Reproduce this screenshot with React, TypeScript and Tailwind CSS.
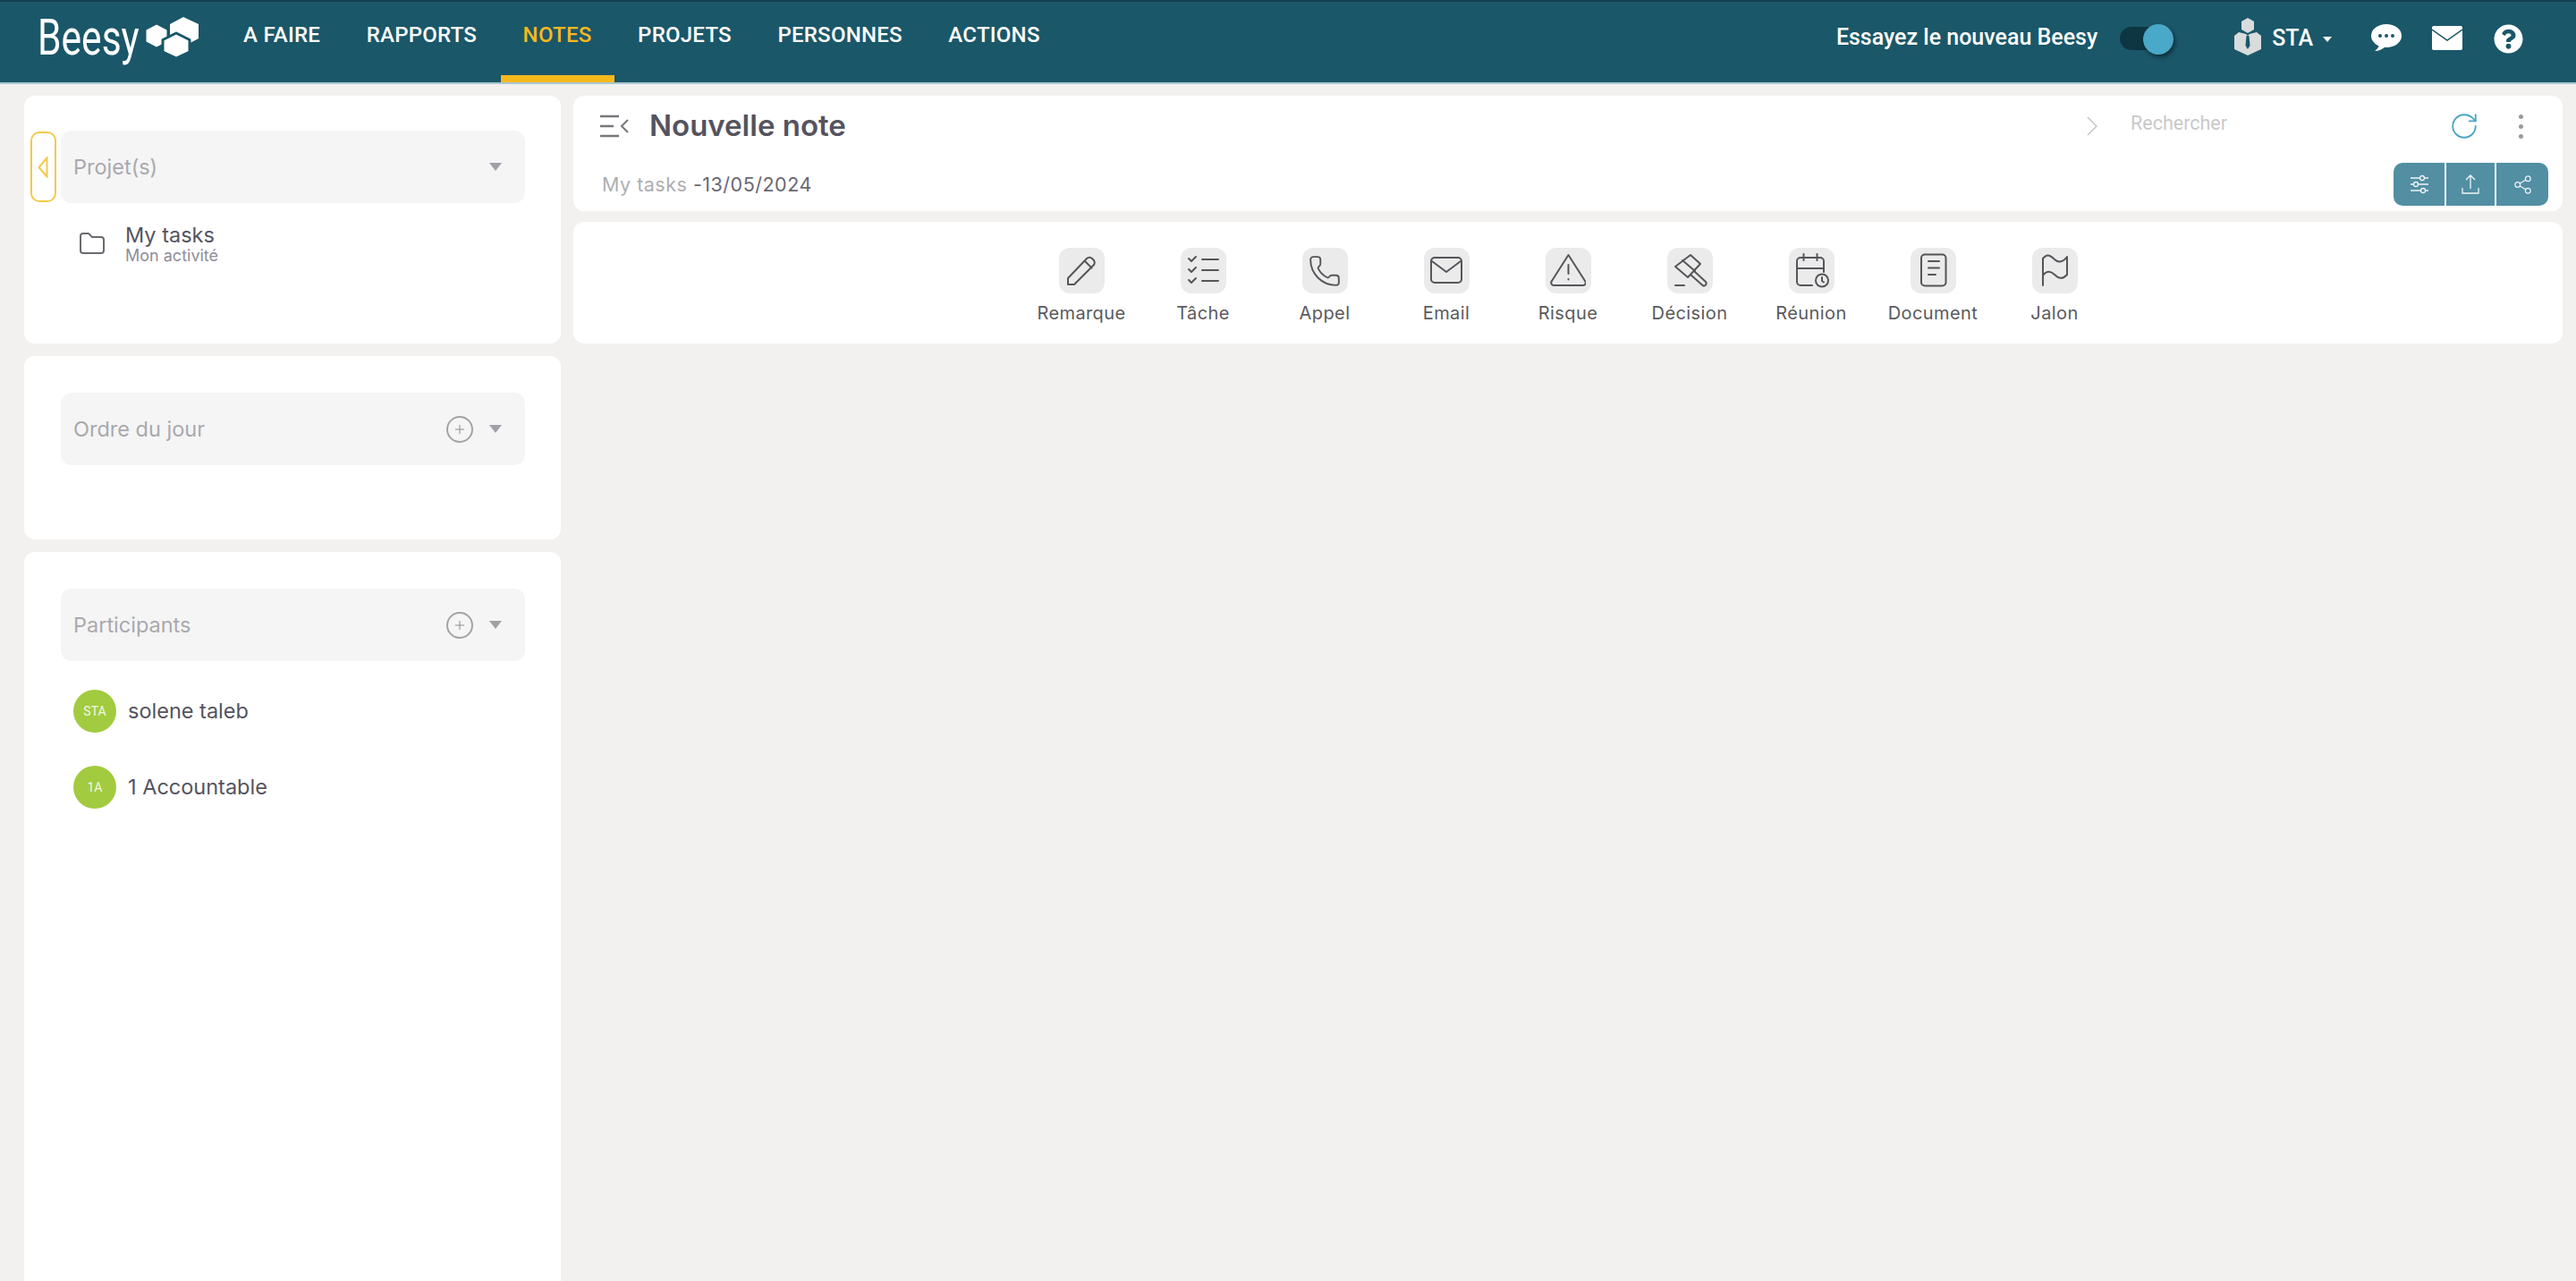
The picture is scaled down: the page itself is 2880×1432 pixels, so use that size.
import { ReactNode } from 'react';
import { Plus, Phone, Share2, RotateCw } from 'lucide-react';
import { FaQuestionCircle } from 'react-icons/fa';

const navItems = ['A FAIRE', 'RAPPORTS', 'NOTES', 'PROJETS', 'PERSONNES', 'ACTIONS'];

function Glyph({ children }: { children: ReactNode }) {
    return (
        <svg viewBox="0 0 40 40" className="w-10 h-10" fill="none" stroke="#55555a" strokeWidth="2" strokeLinecap="round" strokeLinejoin="round">
            {children}
        </svg>
    );
}

const tools: { label: string; icon: ReactNode }[] = [
    {
        label: 'Remarque',
        icon: <Glyph><path d="M5 35v-7L26 6a4.2 4.2 0 0 1 6 0l1.5 1.5a4.2 4.2 0 0 1 0 6L12 35Z" /><path d="M24 9l7.5 7.5" /></Glyph>,
    },
    {
        label: 'Tâche',
        icon: <Glyph><path d="M4 6l3 3 5-5M4 18l3 3 5-5M4 30l3 3 5-5" /><path d="M19 7h18M19 19h18M19 31h18" /></Glyph>,
    },
    {
        label: 'Appel',
        icon: <div className="w-10 h-10 flex items-center justify-center"><Phone size={38} strokeWidth={1.2} className="text-[#55555a]" /></div>,
    },
    {
        label: 'Email',
        icon: <Glyph><rect x="3" y="5" width="34" height="28" rx="4" /><path d="M4 9l16 12L36 9" /></Glyph>,
    },
    {
        label: 'Risque',
        icon: <Glyph><path d="M20.5 2 39 31a3 3 0 0 1-2.5 5h-32A3 3 0 0 1 2 31Z" /><path d="M20.5 13v10M20.5 29v.5" /></Glyph>,
    },
    {
        label: 'Décision',
        icon: <Glyph><path d="M21 2l11 10-14 15L4 15Z" /><path d="M12 8l14 12" /><path d="M25 20l13 12a2.5 2.5 0 0 1-4 3.5L21 24" /><path d="M4 36h10" /></Glyph>,
    },
    {
        label: 'Réunion',
        icon: <Glyph><path d="M21 36H8a4 4 0 0 1-4-4V9a4 4 0 0 1 4-4h22a4 4 0 0 1 4 4v12" /><path d="M11.500 1v7M26.500 1v7M4 17h30" /><circle cx="32" cy="30.500" r="7" /><path d="M32 27v4l2 1.500" /></Glyph>,
    },
    {
        label: 'Document',
        icon: <Glyph><rect x="7" y="1.500" width="27.500" height="35" rx="4" /><path d="M15 9h12M15 16.500h12M15 24h8" /></Glyph>,
    },
    {
        label: 'Jalon',
        icon: <Glyph><path d="M7 36V6c5-6 9-3 13 1s10 3 14-3v20c-5 6-10 4-14 0s-9-5-13 1" /></Glyph>,
    },
];

function Caret() {
    return <div className="w-0 h-0 border-x-[7.5px] border-x-transparent border-t-[9px] border-t-[#a0a0a8]" />;
}

function SectionSelect({ label, withAdd }: { label: string; withAdd?: boolean }) {
    return (
        <div className="h-[81px] bg-[#f5f5f5] rounded-[12px] flex items-center pl-[14px] pr-[26px]">
            <span className="flex-1 text-[23.5px] text-[#a9a9ad]">{label}</span>
            {withAdd && (
                <div className="w-[30px] h-[30px] mr-[18px] rounded-full border-2 border-[#a3a3a7] flex items-center justify-center">
                    <Plus size={16} strokeWidth={1.5} className="text-[#8d8d92]" />
                </div>
            )}
            <Caret />
        </div>
    );
}

function Person({ initials, name }: { initials: string; name: string }) {
    return (
        <div className="flex items-center gap-[13px] pl-[14px]">
            <div className="w-[48px] h-[48px] rounded-full bg-[#a2cb3f] flex items-center justify-center text-[14px] text-white/85 font-['Roboto',sans-serif]">
                {initials}
            </div>
            <span className="text-[23.5px] text-[#55535f]">{name}</span>
        </div>
    );
}

export default function App() {
    return (
        <div className="h-[1432px] overflow-hidden bg-[#f2f1ef] flex flex-col font-['Inter',sans-serif]">

            {/* Top bar */}
            <header className="h-[94px] shrink-0 bg-[#1a5769] border-t-2 border-t-[#10404f] border-b-2 border-b-[#a9c7d0] flex items-stretch font-['Roboto',sans-serif] text-white">
                <div className="w-[247px] shrink-0 flex items-start pl-[42px]">
                    <span className="text-[56px] leading-[56px] mt-[12px] origin-left scale-x-[0.76] w-[121px]">Beesy</span>
                    <svg viewBox="0 0 60 50" className="w-[60px] h-[50px] mt-[15px]" fill="white">
                        <path d="M12 10.500l11.500 6v13l-11.500 6-11.500-6v-13Z" />
                        <path d="M42 2l17 8v16l-17 9-15-9V10Z" />
                        <path d="M34 20l15 7.500V41l-15 7-15-7V27.500Z" stroke="#1a5769" strokeWidth="3" strokeLinejoin="round" />
                    </svg>
                </div>

                <nav className="flex items-stretch gap-[1.5px]">
                    {navItems.map((item) => (
                        <div
                            key={item}
                            className={`px-[25px] pt-[22px] text-[24px] tracking-[0.25px] leading-[30px] font-medium border-b-[8px] ${item === 'NOTES' ? 'text-[#f6b91d] border-b-[#f6b91d]' : 'border-b-transparent'}`}
                        >
                            {item}
                        </div>
                    ))}
                </nav>

                <div className="flex-1 flex items-start justify-end pr-[59px]">
                    <span className="mt-[25px] text-[25px] leading-[30px] font-medium">Essayez le nouveau Beesy</span>

                    {/* Toggle */}
                    <div className="relative w-[60px] h-[26px] mt-[28px] ml-[25px] rounded-full bg-[#0d3542]">
                        <div className="absolute left-[26px] -top-[3px] w-[34px] h-[34px] rounded-full bg-[#4aa8c8] shadow-[2px_3px_4px_rgba(0,0,0,0.45)]" />
                    </div>

                    <svg viewBox="0 0 30 42" className="w-[30px] h-[42px] mt-[18px] ml-[68px]" fill="#d8dcdc">
                        <path d="M15 0l7 4v9l-7 4-7-4V4Z" />
                        <path d="M5 16l8 2 2 2 2-2 8-2 5 4v15l-15 7-15-7V20Z" />
                        <path d="M13.500 20h3l1 11-2.500 4-2.500-4Z" fill="#1a5769" />
                    </svg>

                    <span className="mt-[26px] ml-[12px] text-[25px] leading-[30px] font-medium">STA</span>
                    <div className="mt-[39px] ml-[11px] w-0 h-0 border-x-[5.500px] border-x-transparent border-t-[6px] border-t-white" />

                    <svg viewBox="0 0 34 30" className="w-[34px] h-[30px] mt-[25px] ml-[44px]">
                        <ellipse cx="17" cy="13" rx="17" ry="13" fill="white" />
                        <path d="M9 22c0 3-2 6-5 8 4 0 9-2 12-5Z" fill="white" />
                        <circle cx="10" cy="13" r="2" fill="#1a5769" />
                        <circle cx="17" cy="13" r="2" fill="#1a5769" />
                        <circle cx="24" cy="13" r="2" fill="#1a5769" />
                    </svg>

                    <svg viewBox="0 0 34 27" className="w-[34px] h-[27px] mt-[27px] ml-[34px]">
                        <rect width="34" height="27" rx="2" fill="white" />
                        <path d="M0 4l17 12L34 4" fill="none" stroke="#1a5769" strokeWidth="1.500" />
                    </svg>

                    <FaQuestionCircle size={33} className="mt-[25px] ml-[35px]" />
                </div>
            </header>

            <div className="flex-1 min-h-0 flex gap-[14px] pt-[13px] pl-[27px] pr-[15px]">

                {/* Left column */}
                <aside className="w-[600px] shrink-0 flex flex-col gap-[14px]">
                    <section className="relative h-[277px] bg-white rounded-[12px] pt-[39px] pl-[41px] pr-[40px] shrink-0">
                        <SectionSelect label="Projet(s)" />
                        <button className="absolute left-[7px] top-[40px] w-[29px] h-[79px] rounded-[10px] border-2 border-[#f5c84b] bg-white flex items-center justify-center">
                            <svg width="12" height="24" viewBox="0 0 12 24" fill="none" stroke="#f5c84b" strokeWidth="2" className="-ml-[2px]"><path d="M10.500 1.500v21L1.500 12Z" /></svg>
                        </button>
                        <div className="flex items-center gap-[23px] pl-[21px] mt-[22px]">
                            <svg width="28" height="24" viewBox="0 0 28 24" fill="none" stroke="#6b6a70" strokeWidth="2" strokeLinejoin="round">
                                <path d="M1 4a3 3 0 0 1 3-3h6l4 4h10a3 3 0 0 1 3 3v12a3 3 0 0 1-3 3H4a3 3 0 0 1-3-3Z" />
                            </svg>
                            <div className="flex flex-col">
                                <span className="text-[23.5px] leading-[28px] text-[#55535f]">My tasks</span>
                                <span className="text-[18px] leading-[18px] text-[#8f8d96]">Mon activité</span>
                            </div>
                        </div>
                    </section>

                    <section className="h-[205px] bg-white rounded-[12px] pt-[41px] pl-[41px] pr-[40px] shrink-0">
                        <SectionSelect label="Ordre du jour" withAdd />
                    </section>

                    <section className="flex-1 bg-white rounded-t-[12px] pt-[41px] pl-[41px] pr-[40px]">
                        <SectionSelect label="Participants" withAdd />
                        <div className="flex flex-col gap-[37px] mt-[32px]">
                            <Person initials="STA" name="solene taleb" />
                            <Person initials="1A" name="1 Accountable" />
                        </div>
                    </section>
                </aside>

                {/* Main column */}
                <main className="flex-1 flex flex-col gap-[12px]">
                    <section className="h-[129px] shrink-0 bg-white rounded-[12px] flex flex-col pl-[30px] pr-[16px]">
                        <div className="flex items-center h-[68px]">
                            <svg width="32" height="26" viewBox="0 0 32 26" fill="none" stroke="#77767c" strokeWidth="2.500">
                                <path d="M0 2h21M0 13h15M0 24h21" />
                                <path d="M31 6l-7 7 7 7" strokeWidth="2" />
                            </svg>
                            <h1 className="ml-[23px] text-[33px] font-semibold text-[#55535f]">Nouvelle note</h1>

                            <svg width="12" height="22" viewBox="0 0 12 22" fill="none" stroke="#c4c4c4" strokeWidth="1.500" className="ml-auto">
                                <path d="M1 1l10 10L1 21" />
                            </svg>
                            <span className="ml-[37px] -mt-[6px] w-[356px] text-[21.500px] text-[#c9c9c9] font-['Roboto',sans-serif]">Rechercher</span>
                            <RotateCw size={34} strokeWidth={1.3} className="text-[#4aa5c5]" />
                            <div className="ml-[44px] mr-[28px] flex flex-col gap-[6px]">
                                <div className="w-[5px] h-[5px] rounded-full bg-[#9a9a9a]" />
                                <div className="w-[5px] h-[5px] rounded-full bg-[#9a9a9a]" />
                                <div className="w-[5px] h-[5px] rounded-full bg-[#9a9a9a]" />
                            </div>
                        </div>
                        <div className="flex items-center justify-between mt-[7px]">
                            <div className="text-[21.500px] tracking-[0.5px] pl-[2px]">
                                <span className="text-[#aeaeb2]">My tasks </span>
                                <span className="text-[#6a6873]">-13/05/2024</span>
                            </div>
                            <div className="flex h-[48px] rounded-[10px] overflow-hidden bg-[#528fa3] text-white/90">
                                <div className="w-[57px] flex items-center justify-center">
                                    <svg width="22" height="22" viewBox="0 0 22 22" fill="none" stroke="currentColor" strokeWidth="1.300">
                                        <path d="M1 4h20M1 11h20M1 18h20" />
                                        <circle cx="14" cy="4" r="2.500" fill="#528fa3" />
                                        <circle cx="7" cy="11" r="2.500" fill="#528fa3" />
                                        <circle cx="15" cy="18" r="2.500" fill="#528fa3" />
                                    </svg>
                                </div>
                                <div className="w-[58px] border-x-2 border-x-white flex items-center justify-center">
                                    <svg width="20" height="22" viewBox="0 0 20 22" fill="none" stroke="currentColor" strokeWidth="1.300">
                                        <path d="M10 16V1M5 6l5-5 5 5M1 15v6h18v-6" />
                                    </svg>
                                </div>
                                <div className="w-[58px] flex items-center justify-center">
                                    <Share2 size={23} strokeWidth={1.3} />
                                </div>
                            </div>
                        </div>
                    </section>

                    <section className="h-[136px] shrink-0 bg-white rounded-[12px] flex justify-center pt-[29px]">
                        {tools.map((tool) => (
                            <div key={tool.label} className="w-[136px] flex flex-col items-center">
                                <div className="w-[51px] h-[51px] rounded-[12px] bg-[#ebebeb] flex items-center justify-center">
                                    {tool.icon}
                                </div>
                                <span className="mt-[10px] text-[20px] leading-[24px] tracking-[0.4px] text-[#5a5a5e]">{tool.label}</span>
                            </div>
                        ))}
                    </section>
                </main>
            </div>
        </div>
    );
}
